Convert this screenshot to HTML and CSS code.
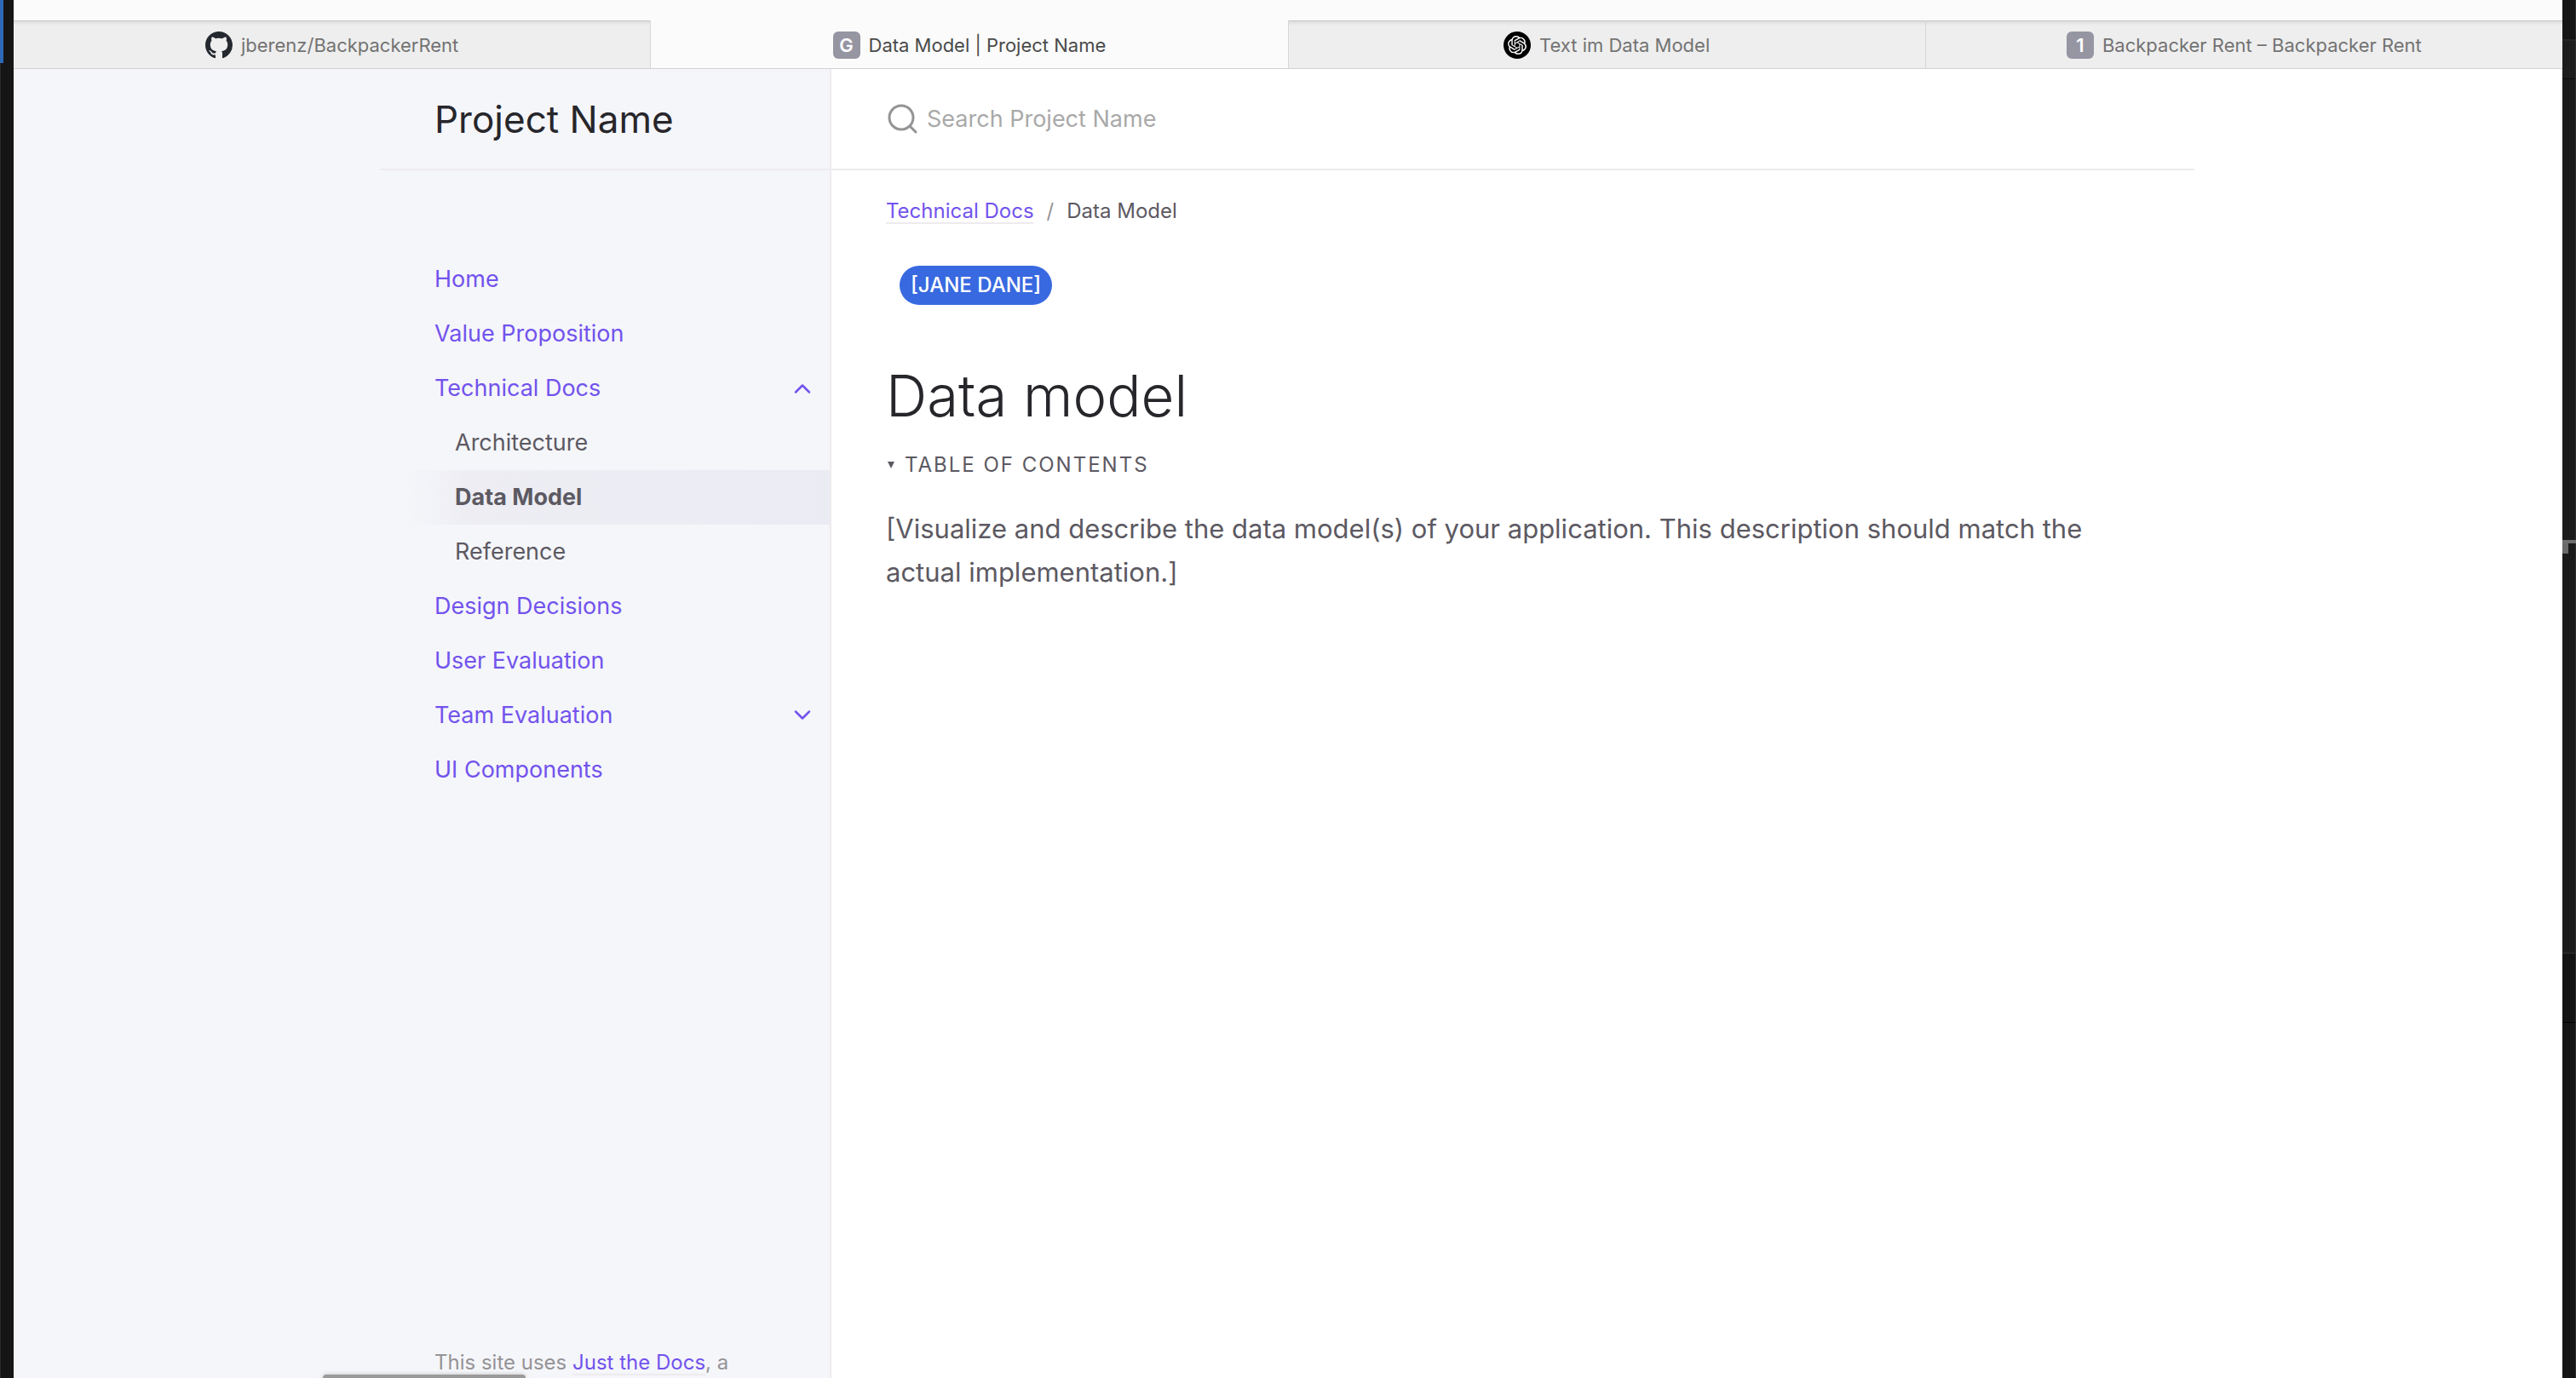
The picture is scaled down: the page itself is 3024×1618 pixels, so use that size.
FILE: index.html
```html
<!DOCTYPE html>
<html lang="en">
<head>
<meta charset="utf-8">
<title>Data Model | Project Name</title>
<link rel="stylesheet" href="styles.css">
</head>
<body>
<div class="desktop">
  <div class="edge edge-left"></div>
  <div class="window">
    <div class="tab-bar" role="tablist">
      <button class="tab" role="tab" type="button">
        <svg class="tab-icon" viewBox="0 0 16 16" aria-hidden="true"><path fill="#24292f" d="M8 0C3.58 0 0 3.58 0 8c0 3.54 2.29 6.53 5.47 7.59.4.07.55-.17.55-.38 0-.19-.01-.82-.01-1.49-2.01.37-2.53-.49-2.69-.94-.09-.23-.48-.94-.82-1.13-.28-.15-.68-.52-.01-.53.63-.01 1.08.58 1.23.82.72 1.21 1.87.87 2.33.66.07-.52.28-.87.51-1.07-1.78-.2-3.64-.89-3.64-3.95 0-.87.31-1.59.82-2.15-.08-.2-.36-1.02.08-2.12 0 0 .67-.21 2.2.82.64-.18 1.32-.27 2-.27s1.36.09 2 .27c1.53-1.04 2.2-.82 2.2-.82.44 1.1.16 1.92.08 2.12.51.56.82 1.27.82 2.15 0 3.07-1.87 3.75-3.65 3.95.29.25.54.73.54 1.48 0 1.07-.01 1.93-.01 2.2 0 .21.15.46.55.38A8.01 8.01 0 0 0 16 8c0-4.42-3.58-8-8-8z"/></svg>
        <span>jberenz/BackpackerRent</span>
      </button>
      <button class="tab tab-active" role="tab" type="button" aria-selected="true">
        <span class="tab-icon tab-letter" aria-hidden="true">G</span>
        <span>Data Model | Project Name</span>
      </button>
      <button class="tab" role="tab" type="button">
        <svg class="tab-icon" viewBox="0 0 32 32" aria-hidden="true"><circle cx="16" cy="16" r="16"/><path fill="#fff" transform="translate(5 5) scale(.917)" d="M22.2819 9.8211a5.9847 5.9847 0 0 0-.5157-4.9108 6.0462 6.0462 0 0 0-6.5098-2.9A6.0651 6.0651 0 0 0 4.9807 4.1818a5.9847 5.9847 0 0 0-3.9977 2.9 6.0462 6.0462 0 0 0 .7427 7.0966 5.98 5.98 0 0 0 .511 4.9107 6.051 6.051 0 0 0 6.5146 2.9001A5.9847 5.9847 0 0 0 13.2599 24a6.0557 6.0557 0 0 0 5.7718-4.2058 5.9894 5.9894 0 0 0 3.9977-2.9001 6.0557 6.0557 0 0 0-.7475-7.0729zm-9.022 12.6081a4.4755 4.4755 0 0 1-2.8764-1.0408l.1419-.0804 4.7783-2.7582a.7948.7948 0 0 0 .3927-.6813v-6.7369l2.02 1.1686a.071.071 0 0 1 .038.052v5.5826a4.504 4.504 0 0 1-4.4945 4.4944zm-9.6607-4.1254a4.4708 4.4708 0 0 1-.5346-3.0137l.142.0852 4.783 2.7582a.7712.7712 0 0 0 .7806 0l5.8428-3.3685v2.3324a.0804.0804 0 0 1-.0332.0615L9.74 19.9502a4.4992 4.4992 0 0 1-6.1408-1.6464zM2.3408 7.8956a4.485 4.485 0 0 1 2.3655-1.9728V11.6a.7664.7664 0 0 0 .3879.6765l5.8144 3.3543-2.0201 1.1685a.0757.0757 0 0 1-.071 0l-4.8303-2.7865A4.504 4.504 0 0 1 2.3408 7.872zm16.5963 3.8558L13.1038 8.364 15.1192 7.2a.0757.0757 0 0 1 .071 0l4.8303 2.7913a4.4944 4.4944 0 0 1-.6765 8.1042v-5.6772a.79.79 0 0 0-.407-.667zm2.0107-3.0231l-.142-.0852-4.7735-2.7818a.7759.7759 0 0 0-.7854 0L9.409 9.2297V6.8974a.0662.0662 0 0 1 .0284-.0615l4.8303-2.7866a4.4992 4.4992 0 0 1 6.6802 4.66zM8.3065 12.863l-2.02-1.1638a.0804.0804 0 0 1-.038-.0567V6.0742a4.4992 4.4992 0 0 1 7.3757-3.4537l-.142.0805L8.704 5.459a.7948.7948 0 0 0-.3927.6813zm1.0976-2.3654l2.602-1.4998 2.6069 1.4998v2.9994l-2.5974 1.4997-2.6067-1.4997Z"/></svg>
        <span>Text im Data Model</span>
      </button>
      <button class="tab" role="tab" type="button">
        <span class="tab-icon tab-letter" aria-hidden="true">1</span>
        <span>Backpacker Rent – Backpacker Rent</span>
      </button>
    </div>

    <div class="page">
      <aside class="sidebar">
        <div class="sidebar-inner">
          <header class="site-header"><a class="site-title" href="#">Project Name</a></header>
          <nav class="site-nav" aria-label="Main">
            <ul class="nav-list">
              <li><a class="nav-link" href="#">Home</a></li>
              <li><a class="nav-link" href="#">Value Proposition</a></li>
              <li>
                <div class="nav-row">
                  <a class="nav-link" href="#">Technical Docs</a>
                  <button class="expander" type="button" aria-label="Collapse Technical Docs" aria-expanded="true">
                    <svg class="chevron" viewBox="0 0 24 24" aria-hidden="true"><path d="M4 16.500L12 8.500L20 16.500"/></svg>
                  </button>
                </div>
                <ul class="nav-list nav-children">
                  <li><a class="nav-link" href="#">Architecture</a></li>
                  <li class="nav-current"><a class="nav-link" href="#" aria-current="page">Data Model</a></li>
                  <li><a class="nav-link" href="#">Reference</a></li>
                </ul>
              </li>
              <li><a class="nav-link" href="#">Design Decisions</a></li>
              <li><a class="nav-link" href="#">User Evaluation</a></li>
              <li>
                <div class="nav-row">
                  <a class="nav-link" href="#">Team Evaluation</a>
                  <button class="expander" type="button" aria-label="Expand Team Evaluation" aria-expanded="false">
                    <svg class="chevron" viewBox="0 0 24 24" aria-hidden="true"><path d="M4 7.500L12 15.500L20 7.500"/></svg>
                  </button>
                </div>
              </li>
              <li><a class="nav-link" href="#">UI Components</a></li>
            </ul>
          </nav>
          <footer class="site-footer">This site uses <a class="text-link" href="#">Just the Docs</a>, a</footer>
        </div>
        <div class="status-pill"></div>
      </aside>

      <div class="main">
        <div class="search">
          <label class="search-label" for="search" aria-label="Search">
            <svg class="search-icon" viewBox="0 0 36 36" aria-hidden="true"><circle cx="16" cy="16" r="14"/><path d="M26 26L33 33"/></svg>
          </label>
          <input class="search-input" id="search" type="search" placeholder="Search Project Name">
        </div>
        <main class="content">
          <nav class="breadcrumb" aria-label="Breadcrumb">
            <a class="text-link" href="#">Technical Docs</a>
            <span class="slash">/</span>
            <span>Data Model</span>
          </nav>
          <p class="label-line"><span class="label">[Jane Dane]</span></p>
          <h1 class="title">Data model</h1>
          <details class="toc" open>
            <summary class="toc-summary"><svg class="toc-marker" viewBox="0 0 8 8" aria-hidden="true"><path d="M0 0H8L4 8Z"/></svg>Table of contents</summary>
          </details>
          <p class="text">[Visualize and describe the data model(s) of your application. This description should match the actual implementation.]</p>
        </main>
      </div>
    </div>
  </div>
  <div class="edge edge-right"><div class="edge-mark"></div></div>
</div>
</body>
</html>
```
FILE: styles.css
```css
* {
  box-sizing: border-box;
}

body {
  margin: 0;
  background: #151515;
  color: #5c5962;
  font-family: Inter, "Liberation Sans", sans-serif;
  font-size: 31px;
  line-height: 51px;
}

button,
input {
  font: inherit;
  color: inherit;
  border: 0;
  background: none;
  padding: 0;
}

a {
  color: #7253ed;
  text-decoration: none;
}

.desktop {
  display: flex;
  height: 100vh;
  overflow: hidden;
}

/* Slivers of the windows behind the browser */
.edge {
  flex: none;
  width: 16px;
}

.edge-left {
  background:
    linear-gradient(#2e69b8, #2e69b8) 0 0 / 4px 74px no-repeat,
    linear-gradient(#2a2a2a, #2a2a2a) 0 0 / 1px 100% no-repeat,
    #151515;
}

.edge-right {
  padding-top: 634px;
  background:
    linear-gradient(#2d2d2d, #2d2d2d) 100% 0 / 1px 100% no-repeat,
    linear-gradient(#151515 46px, #262626 46px 48px, #1d1d1d 48px 92px, #0a0a0a 92px 93px, #1b1b1b 93px 1118px, #262626 1118px 1120px, #131313 1120px 1200px, #000 1200px 1201px, #151515 1201px);
}

.edge-mark {
  height: 16px;
  background:
    linear-gradient(#6f6f6f, #6f6f6f) 0 0 / 100% 4px no-repeat,
    linear-gradient(#6a6a6a, #6a6a6a) 0 0 / 7px 100% no-repeat;
}

.window {
  flex: 1;
  min-width: 0;
  display: flex;
  flex-direction: column;
  background: #fff;
}

/* Browser tabs */
.tab-bar {
  flex: none;
  display: flex;
  padding-top: 24px;
  background: #fbfbfb;
  border-bottom: 1px solid #d2d2d4;
}

.tab {
  flex: 1;
  display: flex;
  align-items: center;
  justify-content: center;
  gap: 10px;
  height: 56px;
  padding-top: 2px;
  background: linear-gradient(#c6c6c6 1px, #dedede 1px, #eee 6px);
  border-right: 1px solid #d6d6d6;
  color: #737373;
  font-size: 22px;
  line-height: 28px;
}

.tab:last-child {
  border-right: 0;
}

.tab-active {
  background: none;
  color: #4a4a4a;
}

.tab-icon {
  flex: none;
  width: 32px;
  height: 32px;
}

.tab-letter {
  border-radius: 6px;
  background: #9695a2;
  color: #fff;
  font-weight: 600;
  line-height: 32px;
}

/* Page */
.page {
  flex: 1;
  min-height: 0;
  display: flex;
}

.sidebar {
  position: relative;
  flex: none;
  display: flex;
  justify-content: flex-end;
  width: calc((100% - 2128px) / 2 + 528px);
  min-width: 528px;
  background: #f5f6fa;
  border-right: 2px solid #eeebee;
}

.sidebar-inner {
  display: flex;
  flex-direction: column;
  width: 528px;
}

.site-header {
  flex: none;
  display: flex;
  align-items: center;
  height: 119px;
  padding: 0 64px;
  border-bottom: 2px solid #eeebee;
}

.site-title {
  color: #27262b;
  font-size: 44px;
  line-height: 60px;
}

.site-nav {
  padding-top: 96px;
  font-size: 27px;
  line-height: 64px;
}

.nav-list {
  margin: 0;
  padding: 0;
  list-style: none;
}

.nav-row {
  display: flex;
}

.nav-link {
  display: block;
  flex: 1;
  padding-left: 64px;
}

.nav-children .nav-link {
  padding-left: 88px;
  color: #5c5962;
}

.nav-current {
  background: linear-gradient(-90deg, #ebebf4, #ededf3 80%, rgba(235, 237, 245, 0) 94%);
}

.nav-current .nav-link {
  font-weight: 700;
}

.expander {
  display: flex;
  align-items: center;
  justify-content: center;
  width: 64px;
  height: 64px;
}

.chevron {
  width: 24px;
  height: 24px;
  fill: none;
  stroke: #7253ed;
  stroke-width: 2.5;
  stroke-linecap: round;
  stroke-linejoin: round;
}

.site-footer {
  margin-top: auto;
  padding: 0 64px;
  color: #959396;
  font-size: 24px;
  line-height: 36px;
}

.text-link {
  text-decoration: underline #eeebee 2px;
  text-underline-offset: 5px;
}

/* Top of the link preview that peeks in at the bottom */
.status-pill {
  position: absolute;
  left: 363px;
  bottom: 0;
  width: 238px;
  height: 4px;
  border-radius: 6px 6px 0 0;
  background: #999;
  box-shadow: 0 0 5px #8888;
}

.main {
  flex: 1;
  min-width: 0;
}

.search {
  display: flex;
  align-items: center;
  gap: 10px;
  max-width: 1600px;
  height: 119px;
  padding: 0 66px;
  border-bottom: 2px solid #eeebee;
}

.search-label {
  display: flex;
}

.search-icon {
  width: 36px;
  height: 36px;
  fill: none;
  stroke: #959396;
  stroke-width: 3;
  stroke-linecap: round;
}

.search-input {
  flex: 1;
  height: 80px;
  font-size: 27px;
  outline: 0;
}

.search-input::placeholder {
  color: #a9a9a9;
}

.content {
  max-width: 1600px;
  padding: 28px 64px;
}

.breadcrumb {
  display: flex;
  gap: 15px;
  font-size: 24px;
  line-height: 40px;
}

.slash {
  color: #959396;
}

.label-line {
  display: flex;
  margin: 44px 0 0;
  padding: 0 16px;
}

.label {
  padding: 0 13px;
  border-radius: 23px;
  background: #3869e0;
  color: #fff;
  font-size: 24px;
  line-height: 46px;
  font-weight: 500;
  text-transform: uppercase;
}

.title {
  margin: 62px 0 0;
  color: #27262b;
  font-size: 67px;
  line-height: 90px;
  font-weight: 300;
}

.toc {
  margin-top: 16px;
  font-size: 24px;
  line-height: 40px;
}

.toc-summary {
  display: flex;
  align-items: center;
  gap: 12px;
  padding-left: 2px;
  list-style: none;
  letter-spacing: 2px;
  text-transform: uppercase;
}

.toc-marker {
  width: 8px;
  height: 8px;
  fill: #5c5962;
}

.text {
  margin: 29px 0 0;
}
```
